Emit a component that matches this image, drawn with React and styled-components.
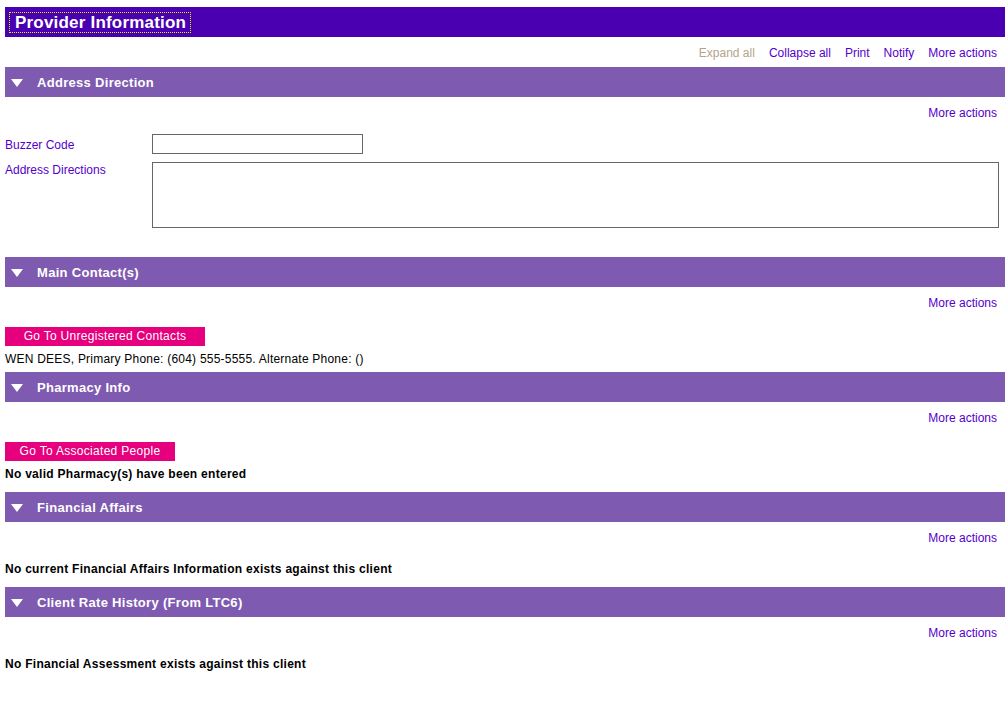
import React from 'react';
import styled, { createGlobalStyle } from 'styled-components';

const GlobalStyle = createGlobalStyle`
  html, body {
    margin: 0;
    padding: 0;
    background: #fff;
  }
  body {
    font-family: "Liberation Sans", Arial, sans-serif;
    font-size: 12px;
    color: #000;
  }
`;

const Page = styled.div`
  padding: 7px 3px 0 5px;
`;

const TitleBar = styled.div`
  height: 30px;
  background: #4a00b0;
  display: flex;
  align-items: center;
  padding-left: 5px;
`;

const Title = styled.h1`
  margin: 0;
  font-size: 17px;
  font-weight: bold;
  color: #fff;
  line-height: 17px;
  letter-spacing: 0.2px;
  padding: 1px 4px 1px 5px;
  outline: 1px dotted #c8ff00;
`;

const ActionBar = styled.div`
  height: 30px;
  display: flex;
  justify-content: flex-end;
  align-items: center;
  gap: 14px;
  padding-right: 8px;
  padding-top: 2px;
  box-sizing: border-box;
`;

const ActionLink = styled.a`
  color: ${p => (p.disabled ? '#b3a48c' : '#5500cc')};
  text-decoration: none;
  cursor: ${p => (p.disabled ? 'default' : 'pointer')};
  font-size: 12px;
`;

const SectionHeader = styled.div`
  height: 30px;
  background: #7e5ab0;
  display: flex;
  align-items: center;
  padding-left: 6px;
  color: #fff;
  font-weight: bold;
  font-size: 13px;
  letter-spacing: 0.3px;
`;

const Caret = styled.span`
  width: 0;
  height: 0;
  border-left: 6.5px solid transparent;
  border-right: 6.5px solid transparent;
  border-top: 8px solid #fff;
  margin-right: 14px;
  margin-top: 1px;
`;

const Body = styled.div`
  padding-top: ${p => p.$top || 10}px;
  padding-bottom: ${p => p.$bottom || 0}px;
`;

const FormRow = styled.div`
  display: grid;
  grid-template-columns: 147px 1fr;
  align-items: start;
  margin-bottom: ${p => p.$gap || 0}px;
`;

const Label = styled.label`
  color: #5500cc;
  font-size: 12px;
  line-height: 14px;
  padding-top: ${p => p.$top || 0}px;
`;

const TextInput = styled.input`
  box-sizing: border-box;
  width: 211px;
  height: 20px;
  border: 1px solid #666;
  padding: 0 3px;
  margin: 0;
  font-family: inherit;
  font-size: 12px;
`;

const TextArea = styled.textarea`
  box-sizing: border-box;
  width: 847px;
  height: 66px;
  border: 1px solid #666;
  padding: 2px 3px;
  margin: 0;
  resize: none;
  display: block;
  font-family: inherit;
  font-size: 12px;
`;

const PinkButton = styled.button`
  display: block;
  box-sizing: border-box;
  height: 19px;
  width: ${p => p.$w}px;
  padding: 0;
  background: #e6007e;
  color: #fff;
  border: none;
  margin: 0 0 6px 0;
  font-family: inherit;
  font-size: 12px;
  letter-spacing: 0.3px;
  line-height: 19px;
  text-align: center;
  white-space: nowrap;
  cursor: pointer;
`;

const Line = styled.div`
  font-size: 12px;
  line-height: 15px;
  letter-spacing: ${p => (p.$bold ? '0.28px' : '0.22px')};
  font-weight: ${p => (p.$bold ? 'bold' : 'normal')};
`;

function Section({ title, children, top, bottom }) {
  return (
    <section>
      <SectionHeader>
        <Caret />
        {title}
      </SectionHeader>
      <ActionBar>
        <ActionLink>More actions</ActionLink>
      </ActionBar>
      <Body $top={top} $bottom={bottom}>
        {children}
      </Body>
    </section>
  );
}

export default function App() {
  return (
    <Page>
      <GlobalStyle />
      <TitleBar>
        <Title>Provider Information</Title>
      </TitleBar>
      <ActionBar>
        <ActionLink disabled>Expand all</ActionLink>
        <ActionLink>Collapse all</ActionLink>
        <ActionLink>Print</ActionLink>
        <ActionLink>Notify</ActionLink>
        <ActionLink>More actions</ActionLink>
      </ActionBar>

      <Section title="Address Direction" top={7} bottom={29}>
        <FormRow $gap={8}>
          <Label $top={4}>Buzzer Code</Label>
          <TextInput type="text" />
        </FormRow>
        <FormRow>
          <Label $top={1}>Address Directions</Label>
          <TextArea />
        </FormRow>
      </Section>

      <Section title="Main Contact(s)" bottom={5}>
        <PinkButton $w={200}>Go To Unregistered Contacts</PinkButton>
        <Line>WEN DEES, Primary Phone: (604) 555-5555. Alternate Phone: ()</Line>
      </Section>

      <Section title="Pharmacy Info" bottom={10}>
        <PinkButton $w={170}>Go To Associated People</PinkButton>
        <Line $bold>No valid Pharmacy(s) have been entered</Line>
      </Section>

      <Section title="Financial Affairs" bottom={10}>
        <Line $bold>No current Financial Affairs Information exists against this client</Line>
      </Section>

      <Section title="Client Rate History (From LTC6)" bottom={10}>
        <Line $bold>No Financial Assessment exists against this client</Line>
      </Section>
    </Page>
  );
}
